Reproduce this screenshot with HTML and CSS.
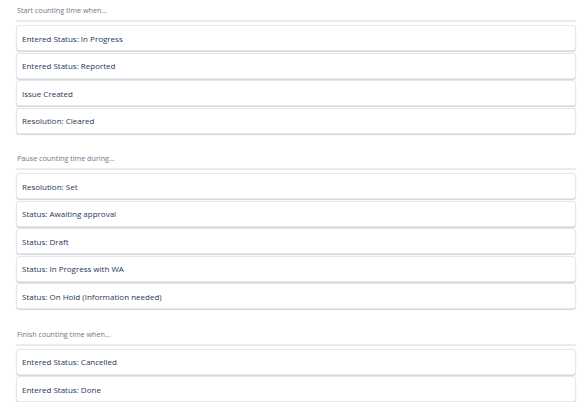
FILE: index.html
```html
<!DOCTYPE html>
<html lang="en">
  <head>
    <meta charset="UTF-8" />
    <title>Time to resolution conditions</title>
    <link rel="stylesheet" href="styles.css">
  </head>
  <body>
    <div class="conditions">
      <!-- Start -->
      <div class="condition-group">
        <h3 class="group-title">Start counting time when...</h3>
        <ul class="condition-list">
          <li class="condition-item">Entered Status: In Progress</li>
          <li class="condition-item">Entered Status: Reported</li>
          <li class="condition-item">Issue Created</li>
          <li class="condition-item">Resolution: Cleared</li>
        </ul>
      </div>

      <!-- Pause -->
      <div class="condition-group">
        <h3 class="group-title">Pause counting time during...</h3>
        <ul class="condition-list">
          <li class="condition-item">Resolution: Set</li>
          <li class="condition-item">Status: Awaiting approval</li>
          <li class="condition-item">Status: Draft</li>
          <li class="condition-item">Status: In Progress with WA</li>
          <li class="condition-item">Status: On Hold (Information needed)</li>
        </ul>
      </div>

      <!-- Finish -->
      <div class="condition-group">
        <h3 class="group-title">Finish counting time when...</h3>
        <ul class="condition-list">
          <li class="condition-item">Entered Status: Cancelled</li>
          <li class="condition-item">Entered Status: Done</li>
        </ul>
      </div>
    </div>
  </body>
</html>
```

FILE: styles.css
```css
body {
  font-family: "Open Sans", "Noto Sans", sans-serif;
  margin: 0;
  padding: 0;
  background-color: #fff;
  color: #253858;
}

.conditions {
  padding: 4px 8px 0 16px;
  display: flex;
  flex-direction: column;
  gap: 18.5px;
}

.group-title {
  margin: 0;
  padding: 0 0 4px 1px;
  font-size: 7.2px;
  line-height: 12px;
  font-weight: 400;
  color: #6b778c;
  border-bottom: 2px solid #ebecf0;
}

.condition-list {
  list-style: none;
  margin: 3px 0 0 0;
  padding: 0;
  display: flex;
  flex-direction: column;
  gap: 1.5px;
}

.condition-item {
  height: 26px;
  box-sizing: border-box;
  padding: 0 5px;
  display: flex;
  align-items: center;
  font-size: 8px;
  background-color: #fff;
  border: 1px solid #e4e6ea;
  border-radius: 3px;
  box-shadow: 0 1px 1px rgba(9, 30, 66, 0.18);
}
```
